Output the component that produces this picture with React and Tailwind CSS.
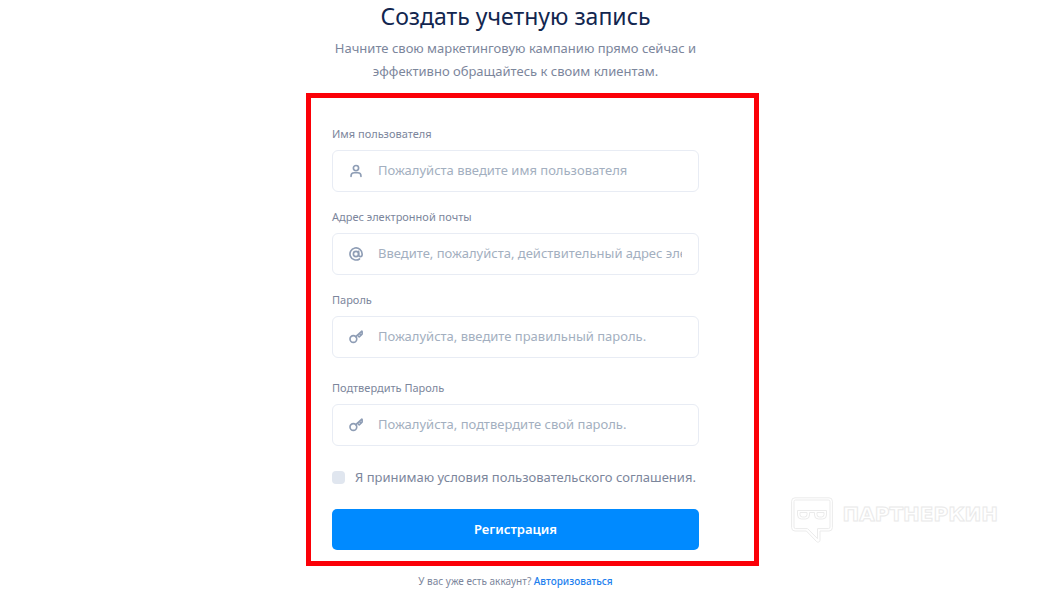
import React, { useState } from 'react'

const UserIcon = () => (
  <svg viewBox="0 0 24 24" fill="none" stroke="currentColor" strokeWidth="2.8" strokeLinecap="round" className="w-[14px] h-[14px]">
    <circle cx="12" cy="7" r="4.5" />
    <path d="M3.5 21.5v-1A5.5 5.5 0 0 1 9 15h6a5.5 5.5 0 0 1 5.5 5.5v1" />
  </svg>
)

const AtIcon = () => (
  <svg viewBox="0 0 24 24" fill="none" stroke="currentColor" strokeWidth="2.8" strokeLinecap="round" className="w-[14px] h-[14px]">
    <circle cx="12" cy="12" r="4.5" />
    <path d="M16.5 7.5v6a3 3 0 0 0 6 0V12a10.4 10.4 0 1 0-4.5 8.5" />
  </svg>
)

const KeyIcon = () => (
  <svg viewBox="0 0 24 24" fill="none" stroke="currentColor" strokeWidth="2.8" strokeLinecap="round" strokeLinejoin="round" className="w-[14px] h-[14px]">
    <circle cx="7.500" cy="15.500" r="5.800" />
    <path d="M11.700 11.300 22 2M14.500 8.500l3 3.200 5-4.700V2.500M18 6l2.500 2.700" />
  </svg>
)

const fields = [
  { id: 'username', type: 'text', label: 'Имя пользователя', placeholder: 'Пожалуйста введите имя пользователя', icon: <UserIcon /> },
  { id: 'email', type: 'email', label: 'Адрес электронной почты', placeholder: 'Введите, пожалуйста, действительный адрес электронной почты', icon: <AtIcon /> },
  { id: 'password', type: 'password', label: 'Пароль', placeholder: 'Пожалуйста, введите правильный пароль.', icon: <KeyIcon /> },
  { id: 'confirm', type: 'password', label: 'Подтвердить Пароль', placeholder: 'Пожалуйста, подтвердите свой пароль.', icon: <KeyIcon />, className: 'mt-[5px]' },
]

const Field = ({ id, type, label, placeholder, icon, className }) => {
  return (
    <div className={className}>
      <label htmlFor={id} className="block text-[11px] leading-5 text-[#7c869c]">{label}</label>
      <div className="mt-[6px] flex h-[42px] items-center rounded-md border border-[#e8ecf4] pl-4 pr-4 text-[#8e9db5]">
        {icon}
        <input id={id} type={type} placeholder={placeholder} className="ml-[15px] min-w-0 flex-1 bg-transparent text-[13px] text-[#1b2b4f] outline-none placeholder:text-[#a3afc0]" />
      </div>
    </div>
  )
}

const Watermark = () => (
  <div className="absolute bottom-[52px] right-[50px] flex items-start gap-[10px]">
    <svg viewBox="0 0 42 46" fill="none" stroke="#ebebeb" className="h-[46px] w-[42px]">
      <path d="M4 .8h34a3.4 3.4 0 0 1 3.4 3.4v26.4A3.4 3.4 0 0 1 38 34h-9v9.200a2 2 0 0 1-3.400 1.400L15.400 34H4a3.400 3.400 0 0 1-3.400-3.400V4.200A3.400 3.400 0 0 1 4 .8z" />
      <path d="M4.600 3h32.800A1.600 1.600 0 0 1 39 4.600V30a1.600 1.600 0 0 1-1.600 1.600H26.500v10l-10-10H4.600A1.600 1.600 0 0 1 3 30V4.600A1.600 1.600 0 0 1 4.600 3z" />
      <path d="M6.500 13.500h29V18a4 4 0 0 1-4 4h-4a4 4 0 0 1-4-4v-2.500h-5V18a4 4 0 0 1-4 4h-4a4 4 0 0 1-4-4z" />
      <path d="M9 15.500h7v2a2.500 2.500 0 0 1-2.500 2.500h-2A2.500 2.500 0 0 1 9 17.500zM26 15.500h7v2a2.500 2.500 0 0 1-2.500 2.500h-2a2.500 2.500 0 0 1-2.500-2.500z" />
    </svg>
    <span className="font-['DejaVu_Sans',sans-serif] text-[20px] font-bold leading-[34px] text-white [-webkit-text-stroke:1px_#e9e9e9]">ПАРТНЕРКИН</span>
  </div>
)

const App = () => {
  const [accepted, setAccepted] = useState(false)

  return (
    <div className="relative overflow-hidden bg-white pb-1 font-['Noto_Sans',sans-serif]">
      <main className="mx-auto max-w-[470px] pl-[17px]">
        <header className="pr-[34px] text-center">
          <h1 className="text-[23px] leading-[32px] text-[#12264f]">Создать учетную запись</h1>
          <p className="mx-auto mt-[5px] max-w-[367px] text-[13px] leading-[23px] text-[#7c869c]">
            Начните свою маркетинговую кампанию прямо сейчас и эффективно обращайтесь к своим клиентам.
          </p>
        </header>

        {/* Form */}
        <form onSubmit={(e) => e.preventDefault()} className="mt-[10px] border-[5px] border-[#fb0007] pb-[11px] pl-[21px] pr-[55px] pt-[26px]">
          <div className="flex flex-col gap-[15px]">
            {fields.map((field) => (
              <Field key={field.id} {...field} />
            ))}
          </div>

          <label className="mt-[21px] flex items-center gap-[10px] whitespace-nowrap text-[13px] leading-5 text-[#7c869c]">
            <input type="checkbox" checked={accepted} onChange={(e) => setAccepted(e.target.checked)} className="h-[13px] w-[13px] shrink-0 appearance-none rounded bg-[#e0e6ef] checked:bg-[#008aff]" />
            Я принимаю условия пользовательского соглашения.
          </label>

          <button type="submit" className="mt-[22px] h-[41px] w-full cursor-pointer rounded-[5px] bg-[#008aff] text-[13px] font-semibold text-white">Регистрация</button>
        </form>

        <p className="mt-[5px] pr-[34px] text-center text-[10px] leading-5 text-[#7c869c]">
          У вас уже есть аккаунт? <a href="#" className="font-medium text-[#2280ee]">Авторизоваться</a>
        </p>
      </main>

      <Watermark />
    </div>
  )
}

export default App
